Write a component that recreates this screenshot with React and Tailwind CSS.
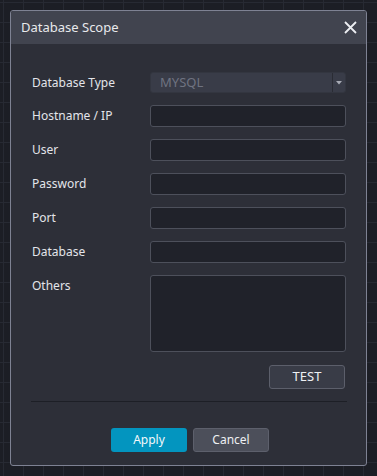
const fields = ['Hostname / IP', 'User', 'Password', 'Port', 'Database']

function Label({ children }) {
  return <span className="text-[12px] leading-none text-[#e3e5ea]">{children}</span>
}

export default function App() {
  return (
    <div
      className="w-[377px] h-[476px] bg-[#1c1e25] pt-[10px] pl-[10px] font-['Noto_Sans',sans-serif] bg-[linear-gradient(#272a33_1px,transparent_1px),linear-gradient(90deg,#272a33_1px,transparent_1px)] bg-[size:20px_20px] bg-[position:3px_2px]"
    >
      <div className="w-[357px] h-[456px] flex flex-col border border-[#7e8293] rounded-[3px] bg-[#2d2f38] overflow-hidden">
        <div className="h-[33px] shrink-0 flex items-center justify-between pl-[10px] pr-[9px] bg-[#41444f]">
          <span className="text-[13px] text-[#e8e9ec]">Database Scope</span>
          <svg width="13" height="13" viewBox="0 0 13 13" className="text-[#eceef2]">
            <path d="M1 1L12 12M12 1L1 12" stroke="currentColor" strokeWidth="1.8" />
          </svg>
        </div>

        <div className="flex flex-col pt-[28px] pl-[21px] pr-[20px]">
          <div className="grid grid-cols-[118px_1fr] gap-y-[12px] items-center">
            <Label>Database Type</Label>
            <div className="h-[21px] flex rounded-[3px] bg-[#393c48] border border-[#333640]">
              <span className="flex-1 flex items-center pl-[9px] text-[13px] text-[#6f7381]">MYSQL</span>
              <span className="w-[13px] flex items-center justify-center border-l border-[#2a2c34]">
                <svg width="6" height="4" viewBox="0 0 6 4">
                  <path d="M0 0H6L3 3.5Z" fill="#a8abb5" />
                </svg>
              </span>
            </div>

            {fields.map((f) => (
              <div key={f} className="contents">
                <Label>{f}</Label>
                <div className="h-[22px] rounded-[3px] bg-[#20222a] border border-[#4d505b]" />
              </div>
            ))}

            <div className="self-start h-[22px] flex items-center">
              <Label>Others</Label>
            </div>
            <div className="h-[77px] rounded-[3px] bg-[#20222a] border border-[#4d505b]" />
          </div>

          <div className="flex justify-end mt-[13px] pr-[1px]">
            <button className="w-[76px] h-[24px] rounded-[3px] bg-[#393c47] border border-[#5c5f6b] text-[13px] text-[#eef0f3]">
              TEST
            </button>
          </div>

          <div className="mt-[12px] mr-[-1px] ml-[-1px] h-[1px] bg-[#1d1f26]" />

          <div className="flex justify-center gap-[6px] mt-[26px] pl-[2px]">
            <button className="w-[76px] h-[24px] rounded-[3px] bg-[#0395bf] text-[12px] text-[#f4f8fb]">
              Apply
            </button>
            <button className="w-[76px] h-[24px] rounded-[3px] bg-[#4c4f5a] border border-[#5d606c] text-[12px] text-[#eef0f3]">
              Cancel
            </button>
          </div>
        </div>
      </div>
    </div>
  )
}
